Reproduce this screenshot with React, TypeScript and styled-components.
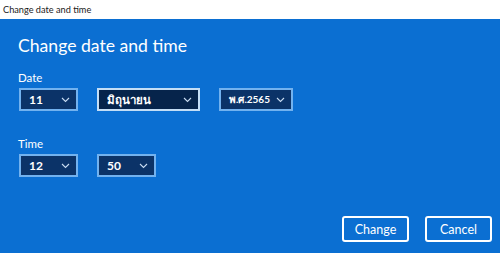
import styled, { createGlobalStyle } from "styled-components";

const Global = createGlobalStyle`
  html, body { margin: 0; padding: 0; }
  body { width: 500px; height: 253px; overflow: hidden; font-family: Lato, "Noto Sans", sans-serif; }
`;

const Window = styled.div`
  width: 500px;
  height: 253px;
  display: flex;
  flex-direction: column;
`;

const TitleBar = styled.div`
  height: 19px;
  background: #ffffff;
  color: #1a1a1a;
  font-size: 9.2px;
  line-height: 19px;
  padding-left: 3px;
`;

const Panel = styled.div`
  flex: 1;
  background: #0b6fd2;
  color: #ffffff;
  padding: 13px 8px 0 18px;
  display: flex;
  flex-direction: column;
`;

const Heading = styled.h1`
  margin: 0 0 11px;
  font-size: 17.6px;
  font-weight: 400;
  line-height: 28px;
`;

const Label = styled.div`
  font-size: 11.5px;
  line-height: 14px;
  margin-bottom: 3px;
`;

const Row = styled.div<{ $gap: number }>`
  display: flex;
  gap: ${(p) => p.$gap}px;
  padding-left: 1px;
`;

const Group = styled.div<{ $mb?: number }>`
  margin-bottom: ${(p) => p.$mb ?? 0}px;
`;

const Select = styled.div<{ $w: number; $fs: number; $active?: boolean }>`
  box-sizing: border-box;
  width: ${(p) => p.$w}px;
  height: 23px;
  border: 2px solid ${(p) => (p.$active ? "#c4def6" : "#72b2ef")};
  background: ${(p) => (p.$active ? "#06244b" : "#0b3368")};
  display: flex;
  align-items: center;
  justify-content: space-between;
  padding: 0 6px 0 8px;
  font-size: ${(p) => p.$fs}px;
  font-family: Lato, "Noto Sans", sans-serif;
  font-weight: 700;
  white-space: nowrap;
`;

const Footer = styled.div`
  margin-top: auto;
  margin-bottom: 11px;
  display: flex;
  justify-content: flex-end;
  gap: 16px;
`;

const Button = styled.button`
  box-sizing: border-box;
  width: 67px;
  height: 26px;
  border: 2px solid #ffffff;
  border-radius: 3px;
  background: #0b6fd2;
  color: #ffffff;
  font-family: Lato, "Noto Sans", sans-serif;
  font-size: 12.5px;
  padding: 0;
`;

const Chevron = () => (
  <svg width="9" height="6" viewBox="0 0 9 6">
    <path d="M1 1 L4.5 4.5 L8 1" fill="none" stroke="#c8dcf2" strokeWidth="1.1" />
  </svg>
);

const Dropdown = ({ value, w, fs = 12, active }: { value: string; w: number; fs?: number; active?: boolean }) => (
  <Select $w={w} $fs={fs} $active={active}>
    <span>{value}</span>
    <Chevron />
  </Select>
);

export default function App() {
  return (
    <Window>
      <Global />
      <TitleBar>Change date and time</TitleBar>
      <Panel>
        <Heading>Change date and time</Heading>
        <Group $mb={26}>
          <Label>Date</Label>
          <Row $gap={19}>
            <Dropdown value="11" w={59} />
            <Dropdown value="มิถุนายน" w={103} fs={11.5} active />
            <Dropdown value="พ.ศ.2565" w={74} fs={10} />
          </Row>
        </Group>
        <Group>
          <Label>Time</Label>
          <Row $gap={19}>
            <Dropdown value="12" w={59} />
            <Dropdown value="50" w={59} />
          </Row>
        </Group>
        <Footer>
          <Button>Change</Button>
          <Button>Cancel</Button>
        </Footer>
      </Panel>
    </Window>
  );
}
